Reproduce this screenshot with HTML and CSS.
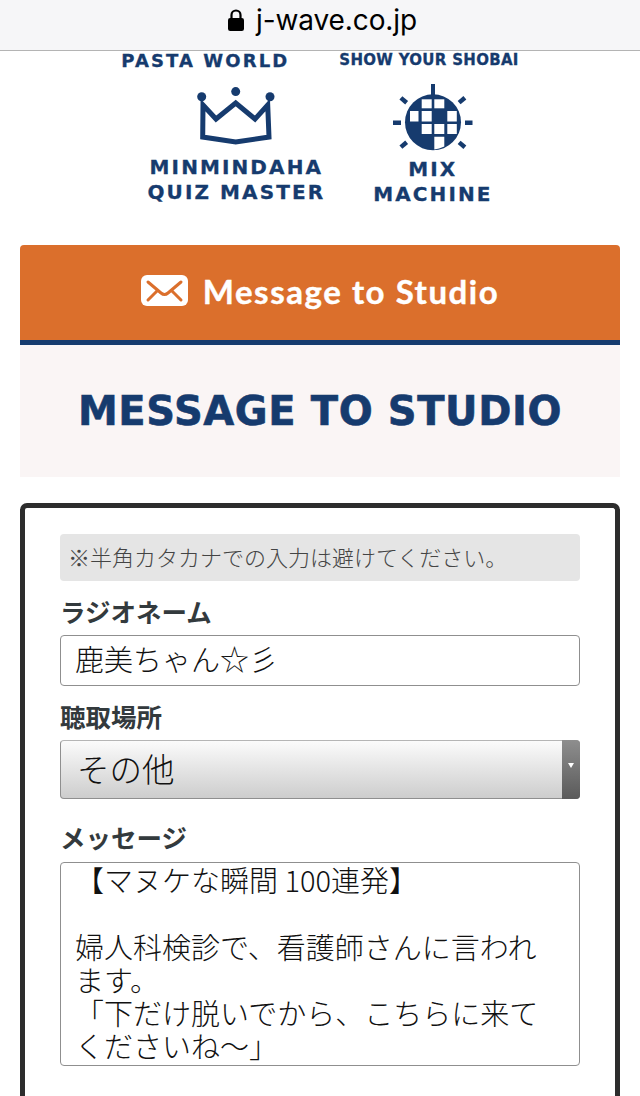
FILE: index.html
```html
<!DOCTYPE html>
<html lang="ja">
    <head>
        <meta charset="utf-8" />
        <title>Message to Studio</title>
        <link rel="stylesheet" href="styles.css">
    </head>
    <body>
        <div class="urlbar">
            <svg class="lock" width="16" height="24" viewBox="0 0 16 24">
                <path d="M3.5 10V7a4.5 4.5 0 0 1 9 0v3" fill="none" stroke="#000" stroke-width="2.2"/>
                <rect x="0" y="10" width="16" height="13" rx="2.2" fill="#000"/>
            </svg>
            <span>j-wave.co.jp</span>
        </div>

        <div class="captions">
            <span class="capLeft">PASTA WORLD</span>
            <span class="capRight">SHOW YOUR SHOBAI</span>
        </div>
        <div class="menus">
            <a class="menu quiz">
                <svg width="80" height="60" viewBox="0 0 80 60">
                    <circle cx="5.7" cy="9.7" r="4.5" fill="#163b6e"/>
                    <circle cx="39.7" cy="4.6" r="4.5" fill="#163b6e"/>
                    <circle cx="74" cy="9.7" r="4.5" fill="#163b6e"/>
                    <path d="M7 18 20 32 39.7 16 59 32 71.7 18 73 50 39.7 55 6.7 50Z" fill="none" stroke="#163b6e" stroke-width="5"/>
                </svg>
                <span>MINMINDAHA<br>QUIZ MASTER</span>
            </a>
            <a class="menu mix">
                <svg width="82" height="70" viewBox="0 0 82 70">
                    <rect x="39" y="1" width="4" height="12" fill="#163b6e"/>
                    <circle cx="41" cy="39.3" r="28" fill="#163b6e"/>
                    <g fill="#fff">
                        <rect x="29.7" y="16.3" width="10" height="9"/>
                        <rect x="42.3" y="16.3" width="10" height="9"/>
                        <rect x="18" y="28" width="8.5" height="10.5"/>
                        <rect x="29.7" y="28" width="10" height="10.5"/>
                        <rect x="55.3" y="28" width="9.5" height="10.5"/>
                        <rect x="29.7" y="41" width="10" height="10"/>
                        <rect x="42.3" y="41" width="10" height="10"/>
                        <rect x="55.3" y="41" width="9.5" height="10"/>
                        <path d="M42.3 53.7H52.3V63.5Q47 65.8 42.3 66.5Z"/>
                    </g>
                    <g fill="#163b6e">
                        <rect x="1" y="37.5" width="8" height="4.5"/>
                        <rect x="73" y="37.5" width="7.5" height="4.5"/>
                        <rect x="8" y="15" width="7.5" height="4.5" transform="rotate(40 11.7 17.3)"/>
                        <rect x="66.3" y="15" width="7.5" height="4.5" transform="rotate(-40 70 17.3)"/>
                        <rect x="8" y="59.5" width="7.5" height="4.5" transform="rotate(-40 11.7 61.7)"/>
                        <rect x="66.3" y="59.5" width="7.5" height="4.5" transform="rotate(40 70 61.7)"/>
                    </g>
                </svg>
                <span>MIX<br>MACHINE</span>
            </a>
        </div>

        <div class="wrap">
            <a class="msgButton">
                <svg width="47" height="31" viewBox="0 0 47 31">
                    <rect width="47" height="31" rx="6" fill="#fff"/>
                    <path d="M7 7 20 18Q23.5 21 27 18L40 7M7 25 15.5 16.5M40 25 31.5 16.5" fill="none" stroke="#db6f2c" stroke-width="3" stroke-linecap="round"/>
                </svg>
                <span>Message to Studio</span>
            </a>
            <h1 class="pageTitle">MESSAGE TO STUDIO</h1>

            <form class="formBox">
                <p class="note">※半角カタカナでの入力は避けてください。</p>
                <label class="lbl">ラジオネーム</label>
                <input class="field" type="text" value="鹿美ちゃん☆彡" />
                <label class="lbl lblPlace">聴取場所</label>
                <div class="selectWrap">
                    <select class="sel">
                        <option>その他</option>
                    </select>
                    <span class="selBtn"></span>
                </div>
                <label class="lbl lblMsg">メッセージ</label>
                <textarea class="area">【マヌケな瞬間 100連発】

婦人科検診で、看護師さんに言われます。
「下だけ脱いでから、こちらに来てくださいね～」</textarea>
            </form>
        </div>
    </body>
</html>
```

FILE: styles.css
```css
html, body{
    margin: 0;
    height: 1096px;
    overflow: hidden;
}

body{
    background-color: #fff;
    color: #333;
    font-family: "Noto Sans CJK JP", sans-serif;
}

.urlbar{
    height: 40px;
    padding: 0 0 10px 5px;
    background-color: #f6f6f8;
    border-bottom: 1px solid #b4b4b4;
    display: flex;
    justify-content: center;
    align-items: center;
    gap: 12px;
    font-family: "Inter", sans-serif;
    font-size: 28px;
    letter-spacing: -0.1px;
    color: #000;
}

.captions{
    display: flex;
    justify-content: center;
    align-items: center;
    gap: 50px;
    height: 18px;
    font-family: "DejaVu Sans", sans-serif;
    font-weight: 700;
    color: #163b6e;
    -webkit-text-stroke: 0.3px #163b6e;
}

.capLeft{
    font-size: 18px;
    letter-spacing: 2.1px;
}

.capRight{
    font-size: 15px;
    letter-spacing: 0.3px;
}

.menus{
    display: flex;
    justify-content: center;
    gap: 48px;
    margin-top: 14px;
}

.menu{
    display: flex;
    flex-direction: column;
    align-items: center;
    font-family: "DejaVu Sans", sans-serif;
    font-weight: 700;
    font-size: 20px;
    line-height: 25px;
    letter-spacing: 2.1px;
    text-align: center;
    color: #163b6e;
    -webkit-text-stroke: 0.3px #163b6e;
}

.menu svg{
    display: block;
}

.quiz svg{
    margin-top: 4px;
}

.quiz span{
    margin-top: 8px;
}

.mix span{
    margin-top: 4px;
}

.wrap{
    margin: 38px 20px 0;
}

.msgButton{
    height: 91px;
    padding-bottom: 4px;
    background-color: #db6f2c;
    border-radius: 4px 4px 0 0;
    border-bottom: 5px solid #163b6e;
    display: flex;
    justify-content: center;
    align-items: center;
    gap: 15px;
    color: #fff;
    font-family: "Lato", sans-serif;
    font-weight: 700;
    font-size: 33px;
    letter-spacing: 1.55px;
    -webkit-text-stroke: 0.4px #fff;
}

.pageTitle{
    margin: 0;
    height: 132px;
    line-height: 133px;
    background-color: #faf5f5;
    color: #163b6e;
    text-align: center;
    font-family: "DejaVu Sans", sans-serif;
    font-weight: 700;
    font-size: 40px;
    letter-spacing: 0.6px;
    -webkit-text-stroke: 0.6px #163b6e;
}

.formBox{
    margin-top: 26px;
    height: 593px;
    box-sizing: border-box;
    border: 5px solid #2d2d2d;
    border-bottom: 0;
    border-radius: 7px 7px 0 0;
    padding: 26px 35px 0;
    display: flex;
    flex-direction: column;
}

.note{
    margin: 0;
    height: 47px;
    line-height: 45px;
    padding-left: 8px;
    background-color: #e5e5e5;
    border-radius: 4px;
    font-size: 22px;
    font-weight: 300;
    color: #444;
    white-space: nowrap;
}

.lbl{
    font-size: 25.5px;
    font-weight: 700;
    line-height: 30px;
    margin-top: 15px;
    margin-bottom: 9px;
    color: #333a3d;
}

.lblMsg{
    margin-top: 23px;
    margin-bottom: 10px;
}

.field{
    height: 51px;
    box-sizing: border-box;
    border: 1px solid #8f8f8f;
    border-radius: 4px;
    padding: 0 14px 6px;
    font-family: "Noto Sans CJK JP", sans-serif;
    font-size: 29px;
    font-weight: 300;
    color: #111;
}

.selectWrap{
    position: relative;
    height: 59px;
}

.sel{
    appearance: none;
    width: 100%;
    height: 59px;
    box-sizing: border-box;
    border: 1px solid #8f8f8f;
    border-top-color: #b5b5b5;
    border-radius: 4px;
    padding: 0 16px 4px;
    background: linear-gradient(#fbfbfb, #cdcdcd);
    font-family: "Noto Sans CJK JP", sans-serif;
    font-size: 32.5px;
    font-weight: 300;
    color: #111;
}

.selBtn{
    position: absolute;
    top: 0;
    right: 0;
    width: 18px;
    height: 59px;
    border-radius: 0 4px 4px 0;
    background: linear-gradient(#8e8e8e, #5a5a5a);
}

.selBtn::after{
    content: "";
    position: absolute;
    top: 23px;
    left: 6px;
    border-left: 3px solid transparent;
    border-right: 3px solid transparent;
    border-top: 5px solid #fff;
}

.area{
    height: 204px;
    box-sizing: border-box;
    border: 1px solid #8f8f8f;
    border-radius: 4px;
    padding: 0 14px;
    margin: 0;
    resize: none;
    overflow: hidden;
    font-family: "Noto Sans CJK JP", sans-serif;
    font-size: 29px;
    font-weight: 300;
    line-height: 33.3px;
    color: #111;
}
```
